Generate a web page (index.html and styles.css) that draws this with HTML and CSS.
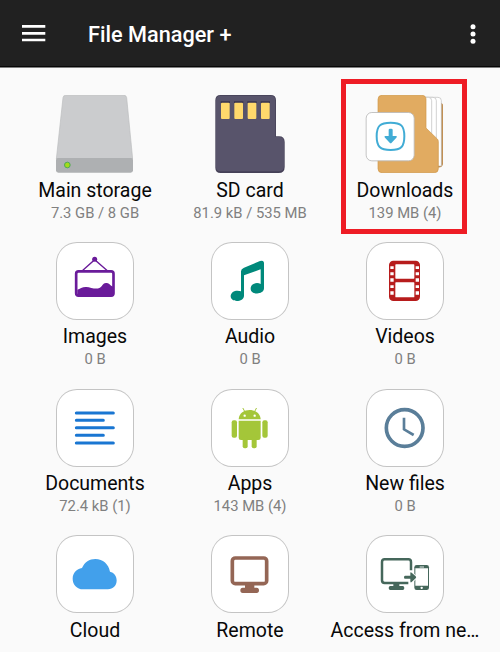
FILE: index.html
```html
<!DOCTYPE html>
<html lang="en">
<head>
<meta charset="utf-8">
<title>File Manager +</title>
<link rel="stylesheet" href="styles.css">
</head>
<body>
<header class="bar">
  <svg class="menu" viewBox="0 0 24 18"><path d="M0 1.4h23.3M0 8.4h23.3M0 15h23.3" stroke="#fff" stroke-width="2.6"/></svg>
  <h1 class="title">File Manager +</h1>
  <svg class="more" viewBox="0 0 6 20"><g fill="#fff"><circle cx="3" cy="2.7" r="2.5"/><circle cx="3" cy="10" r="2.5"/><circle cx="3" cy="17.3" r="2.5"/></g></svg>
</header>
<main class="grid">
  <section class="item">
    <svg class="icon" viewBox="75 30 234 234">
      <path d="M107 31H282Q289 31 290 38L308 222H79L99 38Q100 31 107 31Z" fill="#cbccce" stroke="#bbbcbe" stroke-width="2"/>
      <path d="M84 219H303Q309 219 309 225V256Q309 263 302 263H85Q78 263 78 256V225Q78 219 84 219Z" fill="#aeb0b2"/>
      <circle cx="112" cy="240" r="8.5" fill="#a2dc18" stroke="#4fa957" stroke-width="3"/>
    </svg>
    <div class="name">Main storage</div><div class="info">7.3 GB / 8 GB</div>
  </section>
  <section class="item">
    <svg class="icon" viewBox="90 30 234 234">
      <path d="M122 30H272Q288 30 288 46V154H297Q314 154 314 171V246Q314 264 296 264H122Q106 264 106 248V46Q106 30 122 30Z" fill="#454157"/>
      <path d="M122 32H272Q286 32 286 46V156H297Q312 156 312 171V244Q312 259 296 259H122Q108 259 108 246V46Q108 32 122 32Z" fill="#58546b"/>
      <path d="M122 49h28v5h-28zM162 49h28v5h-28zM202 49h28v5h-28zM242 49h28v5h-28z" fill="#37334d"/>
      <g fill="#ffd96c"><rect x="123" y="53" width="26" height="49" rx="3"/><rect x="163" y="53" width="26" height="49" rx="3"/><rect x="203" y="53" width="26" height="49" rx="3"/><rect x="243" y="53" width="26" height="49" rx="3"/></g>
    </svg>
    <div class="name">SD card</div><div class="info">81.9 kB / 535 MB</div>
  </section>
  <section class="item marked">
    <svg class="icon" viewBox="90 69 234 234">
      <path d="M295 93H315Q323 93 323 101V273Q323 284 315 285H295Z" fill="#b87d37" stroke="#b87d37" stroke-width="2"/>
      <g fill="#fff" stroke="#bbb" stroke-width="2"><path d="M260 76H309Q319 76 319 86V282H260Z"/><path d="M250 76H294Q304 76 304 86V282H250Z"/><path d="M240 76H280Q290 76 290 86V282H240Z"/></g>
      <path d="M141 70H260Q273 70 273 82V168L307 201Q310 204 310 209V290Q310 302 298 302H141Q129 302 129 290V82Q129 70 141 70Z" fill="#e1ab61" stroke="#cf9748" stroke-width="2"/>
      <rect x="93.5" y="121.5" width="144" height="145" rx="17" fill="#fff" stroke="#b8b8b8" stroke-width="2.5"/>
      <path d="M167 152C199 152 208 162 208 193S199 234 167 234S125 224 125 193S135 152 167 152Z" fill="none" stroke="#41acd5" stroke-width="6"/>
      <path d="M161 174Q161 170 165 170H169Q173 170 173 174V192H183Q188 192 184 197L170 212Q167 216 164 212L150 197Q146 192 151 192H161Z" fill="#41acd5"/>
    </svg>
    <div class="name">Downloads</div><div class="info">139 MB (4)</div>
  </section>

  <section class="item">
    <svg class="icon card" viewBox="77 21 234 234">
      <path d="M155 108L193 74L232 108" fill="none" stroke="#6a1b9a" stroke-width="4"/><circle cx="193" cy="73" r="7.5" fill="#6a1b9a"/>
      <rect x="137.5" y="109" width="112" height="73" rx="7" fill="none" stroke="#6a1b9a" stroke-width="8"/>
      <path d="M141 164C149 162 157 155 168 156C181 157 196 164 207 159C216 155 218 142 229 144C236 143 240 153 248 155V183H141Z" fill="#6a1b9a"/>
    </svg>
    <div class="name">Images</div><div class="info">0 B</div>
  </section>
  <section class="item">
    <svg class="icon card" viewBox="93 21 234 234">
      <path d="M192 98L240 78Q252 74 252 85V160C252 180 212 181 212 161C212 145 231 141 242 147V103L192 121V182C192 202 152 204 152 184C152 168 171 164 183 169V109Q183 102 192 98Z" fill="#00897b"/>
    </svg>
    <div class="name">Audio</div><div class="info">0 B</div>
  </section>
  <section class="item">
    <svg class="icon card" viewBox="93 21 234 234">
      <rect x="162" y="77" width="93" height="121" rx="13" fill="#b71c1c"/>
      <g fill="#fff"><rect x="181" y="88" width="57" height="43" rx="2"/><rect x="181" y="142" width="57" height="45" rx="2"/>
      <path d="M166 94h10v8h-10zM166 112h10v9h-10zM166 130h10v10h-10zM166 151h10v8h-10zM166 169h10v10h-10zM242 94h10v8h-10zM242 112h10v9h-10zM242 130h10v10h-10zM242 151h10v8h-10zM242 169h10v10h-10z"/></g>
    </svg>
    <div class="name">Videos</div><div class="info">0 B</div>
  </section>

  <section class="item">
    <svg class="icon card" viewBox="77 26 234 234">
      <path d="M138 98H249M138 120H219M138 142.5H249M138 165H219M138 188H249" stroke="#1976d2" stroke-width="9" stroke-linecap="round"/>
    </svg>
    <div class="name">Documents</div><div class="info">72.4 kB (1)</div>
  </section>
  <section class="item">
    <svg class="icon card" viewBox="93 26 234 234">
      <g fill="#a4c639"><path d="M176 117C178 80 240 80 242 117Z"/><path d="M176 121H242V172Q242 179 235 179H183Q176 179 176 172Z"/>
      <rect x="155" y="120" width="16" height="52" rx="6"/><rect x="247" y="120" width="16" height="52" rx="6"/><rect x="188" y="168" width="15" height="36" rx="6"/><rect x="215" y="168" width="15" height="36" rx="6"/></g>
      <path d="M189 84L196 97M229 84L222 97" stroke="#a4c639" stroke-width="3" stroke-linecap="round"/><circle cx="194" cy="106" r="3.5" fill="#fff"/><circle cx="224" cy="106" r="3.5" fill="#fff"/>
    </svg>
    <div class="name">Apps</div><div class="info">143 MB (4)</div>
  </section>
  <section class="item">
    <svg class="icon card" viewBox="93 26 234 234">
      <circle cx="209" cy="143" r="55" fill="none" stroke="#5a7e99" stroke-width="11"/><path d="M207 112V147L236 164" fill="none" stroke="#5a7e99" stroke-width="8"/>
    </svg>
    <div class="name">New files</div><div class="info">0 B</div>
  </section>

  <section class="item">
    <svg class="icon card" viewBox="77 30 234 234">
      <path d="M158 193C140 193 127 179 127 161C127 144 139 131 155 129C163 111 177 102 195 102C218 102 235 118 239 140C251 142 259 153 259 166C259 182 248 193 233 193Z" fill="#42a0eb"/>
    </svg>
    <div class="name">Cloud</div>
  </section>
  <section class="item">
    <svg class="icon card" viewBox="543 30 234 234">
      <rect x="607" y="99" width="103" height="77" rx="9" fill="none" stroke="#946655" stroke-width="11"/><path d="M645 179H673V188H680Q687 188 687 196T680 204H638Q631 204 631 196T638 188H645Z" fill="#946655"/>
    </svg>
    <div class="name">Remote</div>
  </section>
  <section class="item">
    <svg class="icon card" viewBox="123 30 234 234">
      <path d="M258 136V111Q258 103 250 103H179Q171 103 171 111V166Q171 174 179 174H250" fill="none" stroke="#45675b" stroke-width="7.5"/>
      <path d="M205 177H223V183H233Q238 183 238 189T233 195H196Q191 195 191 189T196 183H205Z" fill="#45675b"/>
      <rect x="268" y="120" width="44" height="75" rx="7" fill="#45675b"/><path d="M271 130H309V182H271Z" fill="#fff"/><path d="M284 126h13" stroke="#fff" stroke-width="2.5"/><circle cx="290" cy="188.5" r="3.5" fill="#fff"/>
      <path d="M240 152H256V144Q256 140 260 143L272 154Q275 157 272 160L260 171Q256 174 256 169V161H240Q237 161 237 156.500T240 152Z" fill="#45675b" stroke="#fff" stroke-width="5" paint-order="stroke"/>
    </svg>
    <div class="name">Access from ne…</div>
  </section>
</main>
</body>
</html>
```
FILE: styles.css
```css
* { box-sizing: border-box; }
html { height: 100%; overflow: hidden; }
body { margin: 0; height: 652px; overflow: hidden; background: #fafafa; font-family: Roboto, "Liberation Sans", sans-serif; }
.bar { display: flex; align-items: center; height: 68px; padding: 0 24px 0 22px; background: #212121; border-bottom: 1px solid #7f7f7f; box-shadow: inset 0 -1px #080808; }
.menu { width: 24px; height: 18px; }
.title { flex: 1; margin: 2px 0 0 42px; color: #fff; font-size: 21.700px; font-weight: 500; line-height: 26px; }
.more { width: 6px; height: 20px; }
.grid { display: grid; grid-template-columns: repeat(3, 155px); grid-auto-rows: 146.700px; padding: 27.200px 0 0 16px; }
.item { position: relative; display: flex; flex-direction: column; align-items: center; text-align: center; }
.icon { display: block; width: 78px; height: 78px; margin-left: 1px; flex: none; }
.card { margin-left: 2.400px; background: #fff; border-radius: 21px; box-shadow: inset 0 0 0 1px #c4c4c4; }
.name { margin-top: 4.500px; padding-left: 3px; font-size: 19.500px; line-height: 25px; color: #080808; white-space: nowrap; }
.info { padding-left: 3px; font-size: 14.800px; line-height: 20px; color: #808080; white-space: nowrap; }
.marked::after { content: ""; position: absolute; box-sizing: border-box; left: 15px; top: -16px; width: 126px; height: 155px; border: 5px solid #ee1c25; }
```
